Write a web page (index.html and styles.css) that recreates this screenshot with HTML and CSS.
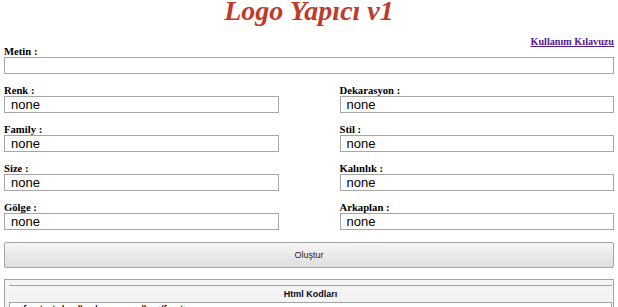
FILE: index.html
```html
<!DOCTYPE html>
<html lang="tr">
<head>
<meta charset="utf-8">
<title>Logo Yapıcı v1</title>
<link rel="stylesheet" href="styles.css">
</head>
<body>
<div class="page">
  <h1 class="title">Logo Yapıcı v1</h1>
  <div class="guide"><a href="#" class="guide-link">Kullanım Kılavuzu</a></div>
  <div class="field field-full">
    <label class="label">Metin :</label>
    <input class="input" type="text" value="">
  </div>
  <div class="cols">
    <div class="col">
      <div class="field"><label class="label">Renk :</label><input class="input" type="text" value="none"></div>
      <div class="field"><label class="label">Family :</label><input class="input" type="text" value="none"></div>
      <div class="field"><label class="label">Size :</label><input class="input" type="text" value="none"></div>
      <div class="field"><label class="label">Gölge :</label><input class="input" type="text" value="none"></div>
    </div>
    <div class="col">
      <div class="field"><label class="label">Dekarasyon :</label><input class="input" type="text" value="none"></div>
      <div class="field"><label class="label">Stil :</label><input class="input" type="text" value="none"></div>
      <div class="field"><label class="label">Kalınlık :</label><input class="input" type="text" value="none"></div>
      <div class="field"><label class="label">Arkaplan :</label><input class="input" type="text" value="none"></div>
    </div>
  </div>
  <button class="build" type="button">Oluştur</button>
  <div class="codes">
    <div class="codes-rule"></div>
    <div class="codes-title">Html Kodları</div>
    <div class="codes-area">&lt;font style="color:none;"&gt;&lt;/font&gt;</div>
  </div>
</div>
</body>
</html>
```
FILE: styles.css
```css
html, body {
  margin: 0;
  padding: 0;
  background: #ffffff;
}
body {
  font-family: "Liberation Serif", "Times New Roman", serif;
  overflow: hidden;
}
.page {
  padding: 0 4px;
}
.title {
  margin: 0;
  font-size: 28px;
  line-height: 22px;
  font-weight: bold;
  font-style: italic;
  text-align: center;
  color: #c0392b;
}
.guide {
  margin-top: 15.4px;
  margin-bottom: -1.2px;
  text-align: right;
  line-height: 10px;
  font-size: 10.2px;
  font-weight: bold;
}
.guide-link {
  color: #551a8b;
  text-decoration: underline;
}
.field {
  margin-bottom: 11.3px;
}
.field-full {
  margin-bottom: 10.3px;
}
.label {
  display: block;
  font-size: 10.67px;
  line-height: 11px;
  font-weight: bold;
  color: #000;
}
.input {
  display: block;
  box-sizing: border-box;
  width: 100%;
  height: 17px;
  margin: 0;
  padding: 0 0 0 6px;
  border: 1px solid #a6a6a6;
  font-family: "Liberation Sans", Arial, sans-serif;
  font-size: 13px;
  color: #000;
  background: #fff;
  outline: none;
}
.cols {
  display: flex;
  justify-content: space-between;
}
.col {
  width: 45%;
}
.build {
  display: block;
  box-sizing: border-box;
  width: 100%;
  height: 26.3px;
  margin: 0 0 11.3px 0;
  padding: 0;
  border: 1px solid #a3a3a3;
  border-radius: 2px;
  background: linear-gradient(#f6f6f6, #dedede);
  font-family: "Liberation Sans", Arial, sans-serif;
  font-size: 9px;
  color: #1c1c1c;
}
.codes {
  border: 1px solid #a3a3a3;
  padding: 5px 1px 0 4px;
  background: linear-gradient(#f5f5f5, #ebebeb);
}
.codes-rule {
  border-top: 1px solid #a3a3a3;
}
.codes-title {
  text-align: center;
  font-family: "Liberation Sans", Arial, sans-serif;
  font-size: 9px;
  font-weight: bold;
  line-height: 16px;
  color: #0a0a1e;
}
.codes-area {
  height: 80px;
  border: 1px solid #a3a3a3;
  background: #fff;
  padding: 0 6px;
  font-family: "Liberation Sans", Arial, sans-serif;
  font-size: 12px;
  line-height: 14px;
  color: #000;
}
```
